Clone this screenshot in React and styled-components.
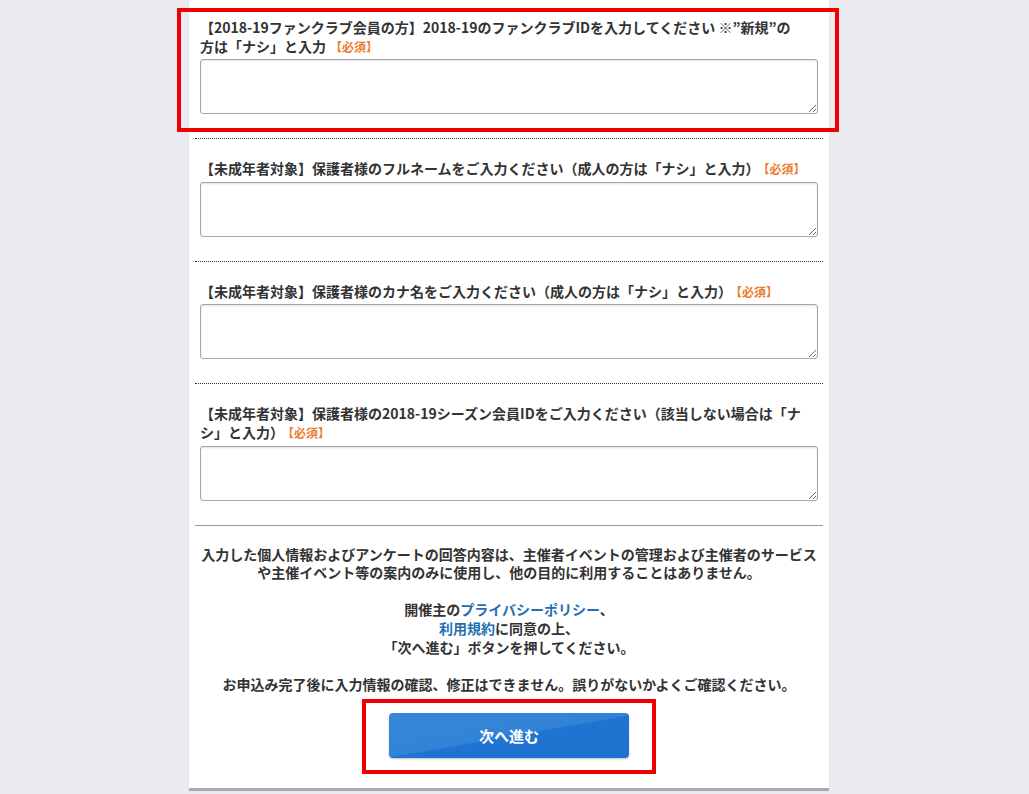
import React from 'react';
import styled, { createGlobalStyle } from 'styled-components'

export default function App() {
    const fields = [
        {
            label: <>【2018-19ファンクラブ会員の方】2018-19のファンクラブIDを入力してください ※”新規”の<Keep>方は</Keep>「ナシ」と入力</>,
            first: true
        },
        { label: '【未成年者対象】保護者様のフルネームをご入力ください（成人の方は「ナシ」と入力）' },
        { label: '【未成年者対象】保護者様のカナ名をご入力ください（成人の方は「ナシ」と入力）' },
        { label: '【未成年者対象】保護者様の2018-19シーズン会員IDをご入力ください（該当しない場合は「ナシ」と入力）', last: true }
    ]

    return (
        <Page>
            <Global />
            <Panel>
                {fields.map((f, i) => (
                    <Field key={i} $first={f.first} $last={f.last}>
                        <Label>
                            {f.label}
                            <Required>【必須】</Required>
                        </Label>
                        <TextArea />
                    </Field>
                ))}
                <Notice>
                    <P>
                        入力した個人情報およびアンケートの回答内容は、主催者イベントの管理および主催者のサービスや主催イベント等の案内のみに使用し、他の目的に利用することはありません。
                    </P>
                    <P>
                        開催主の<Link href="#">プライバシーポリシー</Link>、<br />
                        <Link href="#">利用規約</Link>に同意の上、<br />
                        「次へ進む」ボタンを押してください。
                    </P>
                    <P>お申込み完了後に入力情報の確認、修正はできません。誤りがないかよくご確認ください。</P>
                    <Button type="button">次へ進む</Button>
                </Notice>
            </Panel>
            <Mark $x={177} $y={8} $w={662} $h={124} />
            <Mark $x={362} $y={699} $w={294} $h={75} />
        </Page>
    )
}

const Global = createGlobalStyle`
    html, body {
        margin: 0;
        padding: 0;
        background: #e9ebf0;
        overflow: hidden;
    }
    body {
        font-family: "Noto Sans CJK JP", "Noto Sans", sans-serif;
        color: #333;
    }
`

const Page = styled.div`
    position: relative;
    display: flex;
    justify-content: center;
    padding-right: 11px;
    height: 794px;
`

const Panel = styled.div`
    width: 628px;
    height: 788px;
    padding: 0 6px;
    background: #fff;
    border-bottom: 3px solid #a9aaad;
    box-shadow: 0 0 2px rgba(0, 0, 0, 0.06);
`

const Field = styled.div`
    padding: ${p => (p.$first ? '18px' : '20px')} 5px 24px;
    border-bottom: 1px ${p => (p.$last ? 'solid #999' : 'dotted #333')};
`

const Label = styled.div`
    font-size: 14px;
    font-weight: 700;
    line-height: 18.6px;
    margin-bottom: 4px;
    color: #333;
`

const Keep = styled.span`
    white-space: nowrap;
`

const Required = styled.span`
    margin-left: 4px;
    font-size: 12px;
    line-height: 1;
    color: #ec7b2c;
`

const TextArea = styled.textarea`
    display: block;
    box-sizing: border-box;
    width: 100%;
    height: 55px;
    margin: 0;
    border: 1px solid #a7a7a7;
    border-radius: 3px;
    box-shadow: inset 0 1px 2px rgba(0, 0, 0, 0.12);
    background: #fff;
`

const Notice = styled.div`
    display: flex;
    flex-direction: column;
    align-items: center;
    padding: 19px 5px 0;
    text-align: center;
`

const P = styled.p`
    margin: 0 0 18.6px;
    font-size: 14px;
    font-weight: 700;
    line-height: 18.6px;
    color: #333;
`

const Link = styled.a`
    color: #1f6fb4;
    text-decoration: none;
`

const Button = styled.button`
    width: 240px;
    height: 45px;
    margin-top: 1px;
    border: none;
    border-radius: 4px;
    background: linear-gradient(170deg, #3787d9 0%, #3283d7 50%, #1f74d1 52%, #1c72d0 100%);
    box-shadow: 0 1px 2px rgba(0, 0, 0, 0.25);
    color: #fff;
    font-family: "Noto Sans CJK JP", sans-serif;
    font-size: 15px;
    font-weight: 700;
`

const Mark = styled.div`
    position: absolute;
    left: ${p => p.$x}px;
    top: ${p => p.$y}px;
    width: ${p => p.$w}px;
    height: ${p => p.$h}px;
    box-sizing: border-box;
    border: 4.5px solid #ee0000;
    pointer-events: none;
`
